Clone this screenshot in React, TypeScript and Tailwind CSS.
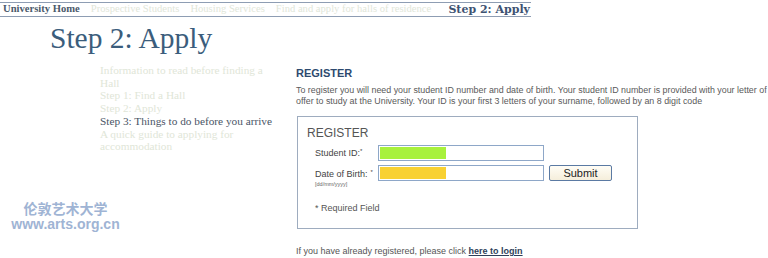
import React from 'react';

const serif = { fontFamily: '"Liberation Serif", "DejaVu Serif", serif' };
const sans = { fontFamily: '"Liberation Sans", Arial, sans-serif' };

const crumbs = [
  'Prospective Students',
  'Housing Services',
  'Find and apply for halls of residence',
];

const navItems = [
  { label: 'Information to read before finding a Hall', active: false },
  { label: 'Step 1: Find a Hall', active: false },
  { label: 'Step 2: Apply', active: false },
  { label: 'Step 3: Things to do before you arrive', active: true },
  { label: 'A quick guide to applying for accommodation', active: false },
];

const App: React.FC = () => {
  return (
    <div className="w-[768px] h-[258px] bg-white overflow-hidden relative">
      {/* Breadcrumb */}
      <div
        className="mt-[2px] w-[531px] h-[15px] border-y border-[#8e9db3] flex items-center gap-[11px] pl-[3px] leading-none whitespace-nowrap"
        style={serif}
      >
        <span className="text-[10.6px] text-[#4b5a6b] font-semibold">University Home</span>
        {crumbs.map((c) => (
          <span key={c} className="text-[10.6px] text-[#dfe6d9]">
            {c}
          </span>
        ))}
        <span
          className="ml-auto pr-[1px] text-[11px] text-[#3d5272] font-bold"
          style={{ fontFamily: '"DejaVu Serif", serif' }}
        >
          Step 2: Apply
        </span>
      </div>

      {/* Title */}
      <h1 className="ml-[50px] mt-[4px] text-[29.5px] leading-[34px] text-[#3b5d7c]" style={serif}>
        Step 2: Apply
      </h1>

      <div className="flex mt-[9px]">
        {/* Left nav */}
        <div className="w-[296px] shrink-0 flex flex-col">
          <ul className="ml-[100px] w-[176px] text-[11.3px] leading-[12.7px]" style={serif}>
            {navItems.map((n) => (
              <li key={n.label} className={n.active ? 'text-[#4a5566]' : 'text-[#dfe6d8]'}>
                {n.label}
              </li>
            ))}
          </ul>
          <div className="mt-[47px] w-[131px] flex flex-col items-center font-bold leading-[16px]" style={sans}>
            <span
              className="text-[14px] text-[#9fb4d4]"
              style={{ fontFamily: '"Noto Sans CJK SC", "Liberation Sans", sans-serif' }}
            >
              伦敦艺术大学
            </span>
            <span className="text-[14px] text-[#9fb4d4]">www.arts.org.cn</span>
          </div>
        </div>

        {/* Register */}
        <div className="flex-1" style={sans}>
          <h2 className="text-[11px] font-bold text-[#2d4a6f] leading-[13px] mt-[3px]">REGISTER</h2>
          <p className="mt-[5px] text-[8.9px] leading-[11px] text-[#5a5a5a]">
            To register you will need your student ID number and date of birth. Your student ID number is provided with your letter of offer to study at the University. Your ID is your first 3 letters of your surname, followed by an 8 digit code
          </p>

          <div className="mt-[9px] ml-[1px] w-[341px] h-[113px] border border-[#9eacbf] pl-[9px] pt-[9px]">
            <div className="text-[12px] leading-[14px] text-[#555]">REGISTER</div>
            <div className="mt-[5px] flex items-center">
              <div className="w-[71px] pl-[8px] text-[9px] text-[#444] pt-[2px]">
                Student ID:<sup className="text-[6px]">*</sup>
              </div>
              <div className="w-[166px] h-[16px] border border-[#8ea7c8] p-[1px]">
                <div className="w-[66px] h-full bg-[#a8f13c]" />
              </div>
            </div>
            <div className="mt-[4px] flex items-start">
              <div className="w-[71px] pl-[8px] text-[9px] text-[#444] leading-[11px]">
                <div className="pt-[4px]">
                  Date of Birth:<sup className="text-[6px] ml-[3px]">*</sup>
                </div>
                <div className="text-[5.5px] leading-[8px] text-[#666]">[dd/mm/yyyy]</div>
              </div>
              <div className="w-[166px] h-[16px] border border-[#8ea7c8] p-[1px]">
                <div className="w-[66px] h-full bg-[#f8d132]" />
              </div>
              <button className="ml-[5px] w-[63px] h-[16px] border border-[#5b7aa3] rounded-[2px] bg-gradient-to-b from-[#fffdf6] to-[#f5eedb] text-[11px] leading-none text-[#222]">
                Submit
              </button>
            </div>
            <div className="mt-[14px] pl-[8px] text-[9px] text-[#555]">* Required Field</div>
          </div>

          <p className="mt-[16px] text-[9px] text-[#555]">
            If you have already registered, please click{' '}
            <a className="font-bold text-[#2e3f5a] underline">here to login</a>
          </p>
        </div>
      </div>
    </div>
  );
};

export default App;
